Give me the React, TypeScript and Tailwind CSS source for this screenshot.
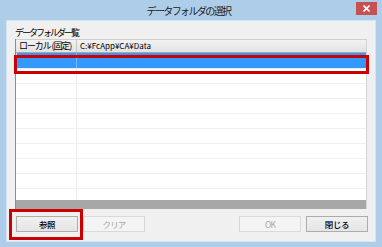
import React from 'react';

const rows = Array.from({ length: 10 }, (_, i) => i);

const Btn: React.FC<{ label: string; disabled?: boolean }> = ({ label, disabled }) => (
  <button
    type="button"
    className={
      disabled
        ? 'w-[62px] h-[16px] border border-[#d9d9d9] bg-[#f4f4f4] text-[#a8a8a8] text-[8.5px] tracking-[-0.8px] leading-none'
        : 'w-[62px] h-[16px] border border-[#acacac] bg-gradient-to-b from-[#f0f0f0] to-[#e5e5e5] text-black font-medium text-[8.5px] tracking-[-0.4px] leading-none'
    }
  >
    {label}
  </button>
);

export default function App() {
  return (
    <div className="relative w-[382px] h-[247px] bg-[#aecde9] flex flex-col font-['Noto_Sans_CJK_JP',sans-serif] overflow-hidden">
      {/* Title bar */}
      <div className="h-[20px] flex items-start shrink-0">
        <div className="flex-1" />
        <div className="pt-[4px] text-[10px] tracking-[-1.6px] leading-[13px] text-[#1a1a1a]">データフォルダの選択</div>
        <div className="flex-1 flex justify-end pr-[5px] pt-[2px]">
          <div className="w-[21px] h-[13px] bg-[#c75050] flex items-center justify-center">
            <svg width="7" height="7" viewBox="0 0 7 7">
              <path d="M0.5 0.5 L6.5 6.5 M6.5 0.5 L0.5 6.5" stroke="#fff" strokeWidth="1.6" />
            </svg>
          </div>
        </div>
      </div>

      {/* Client area */}
      <div className="mx-[6px] mb-[5px] flex-1 border border-[#d5e4f3] bg-[#f0f0f0] flex flex-col">
        <div className="pl-[8px] pt-[6px] h-[18px] text-[9px] tracking-[-2px] leading-[11px] text-black">データフォルダ一覧</div>

        {/* Grid */}
        <div className="ml-[8px] mr-[8px] h-[170px] flex flex-col border-l border-[#8c8c8c] border-r border-r-[#d4d4d4]">
          <div className="h-[14px] shrink-0 flex bg-gradient-to-b from-[#f2f2f2] to-[#e2e2e2] border-t border-[#cfcfcf] border-b border-b-[#a8a8a8] text-black">
            <div className="w-[61px] pl-[3px] border-r border-[#c8c8c8] whitespace-nowrap text-[9px] tracking-[-1.1px] leading-[12px]">ローカル&nbsp;(固定)</div>
            <div className="pl-[3px] text-[8px] leading-[12px] whitespace-nowrap">C:¥FcApp¥CA¥Data</div>
          </div>
          <div className="h-[147px] shrink-0 overflow-hidden bg-white">
            {rows.map((i) =>
              i === 0 ? (
                <div key={i} className="h-[16px] flex bg-[#3399ff] border-b border-[#dcecff] border-l border-l-[#cfe4ff]">
                  <div className="w-[60px] border-r border-[#79b9ff]" />
                  <div className="flex-1" />
                </div>
              ) : (
                <div key={i} className="h-[15px] flex border-b border-[#f0f0f0]">
                  <div className="w-[61px] border-r border-[#ececec]" />
                  <div className="flex-1" />
                </div>
              )
            )}
          </div>
          <div className="flex-1 bg-[#a7a7a7]" />
        </div>

        {/* Buttons */}
        <div className="mt-[7px] pl-[9px] pr-[7px] flex items-center">
          <div className="flex gap-[5px]">
            <Btn label="参照" />
            <Btn label="クリア" disabled />
          </div>
          <div className="flex-1" />
          <div className="flex gap-[5px]">
            <Btn label="OK" disabled />
            <Btn label="閉じる" />
          </div>
        </div>
      </div>

      {/* Annotation highlights */}
      <div className="absolute left-[14px] top-[55px] w-[355px] h-[19px] border-[3px] border-[#cc0000]" />
      <div className="absolute left-[9px] top-[209px] w-[74px] h-[31px] border-[3px] border-[#cc0000]" />
    </div>
  );
}
